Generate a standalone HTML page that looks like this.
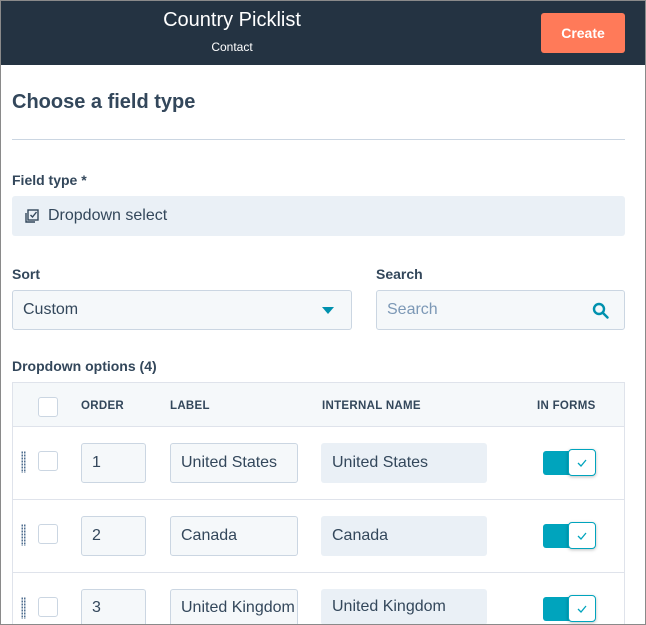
<!DOCTYPE html>
<html style="width:646px;height:625px;overflow:hidden"><head><style>
*{box-sizing:border-box;margin:0;padding:0}
body{width:646px;height:625px;overflow:hidden;background:#fff;font-family:"Liberation Sans",sans-serif;color:#33475b;position:relative}
.frame{position:absolute;left:0;top:0;width:646px;height:625px;border:1px solid #8a8a8a;pointer-events:none;z-index:10}
.a{position:absolute}
.hdr{left:0;top:0;width:646px;height:65px;background:#243342}
.inp{position:absolute;background:#f5f8fa;border:1px solid #cbd6e2;border-radius:3px;font-size:16px;padding-left:10px;display:flex;align-items:center}
.ro{position:absolute;background:#eaf0f6;border-radius:3px;font-size:16px;padding-left:11px;display:flex;align-items:center}
.lbl{font-size:14px;font-weight:bold}
.cb{position:absolute;width:20px;height:20px;border:1.5px solid #cbd6e2;border-radius:3px;background:#fff}
.th{font-size:11.5px;font-weight:bold;letter-spacing:.3px;top:400px}
.tog{position:absolute;width:54px;height:27px}
.tog .t{position:absolute;left:0;top:2px;width:50px;height:24px;background:#00a4bd;border-radius:3px}
.tog .k{position:absolute;left:25px;top:0;width:28px;height:27px;background:#fff;border:1px solid #00a4bd;border-radius:4px;box-shadow:0 1px 3px rgba(0,0,0,.25);display:flex;align-items:center;justify-content:center}
.dots{position:absolute;width:5px;height:22px;background-image:radial-gradient(circle,#516f90 0.9px,transparent 1px);background-size:2.5px 3px}
.line{position:absolute;left:13px;width:611px;height:1px;background:#dfe3eb}
</style></head><body>
<div class="a hdr"></div>
<div class="a" style="left:0;width:464px;top:9px;text-align:center;color:#fff;font-size:20px">Country Picklist</div>
<div class="a" style="left:0;width:464px;top:40px;text-align:center;color:#fff;font-size:12px">Contact</div>
<div class="a" style="left:541px;top:13px;width:84px;height:40px;background:#ff7a59;border-radius:3px;color:#fff;font-weight:bold;font-size:14px;display:flex;align-items:center;justify-content:center">Create</div>

<div class="a" style="left:12px;top:91px;font-size:20px;font-weight:bold">Choose a field type</div>
<div class="a" style="left:12px;top:139px;width:613px;height:1px;background:#cbd6e2"></div>
<div class="a lbl" style="left:12px;top:172px">Field type *</div>
<div class="ro" style="left:12px;top:196px;width:613px;height:40px;padding-left:12px">
<svg width="16" height="16" viewBox="0 0 16 16" fill="none" stroke="#33475b" stroke-width="1.4"><rect x="4" y="2" width="10" height="10"/><path d="M2 5v9h9"/><path d="M6.5 7l2 2 4-5"/></svg><span style="margin-left:8px">Dropdown select</span></div>

<div class="a lbl" style="left:12px;top:266px">Sort</div>
<div class="inp" style="left:12px;top:290px;width:340px;height:40px">Custom</div>
<div class="a" style="left:322px;top:307px;width:0;height:0;border-left:6px solid transparent;border-right:6px solid transparent;border-top:7px solid #0091ae"></div>
<div class="a lbl" style="left:376px;top:266px">Search</div>
<div class="inp" style="left:376px;top:290px;width:249px;height:40px;color:#7c98b6">Search</div>
<svg class="a" style="left:592px;top:302px" width="17" height="17" viewBox="0 0 17 17" fill="none" stroke="#0091ae" stroke-width="2.4"><circle cx="7" cy="7" r="5"/><path d="M11 11l4.5 4.5" stroke-linecap="round"/></svg>

<div class="a lbl" style="left:12px;top:358px">Dropdown options (4)</div>
<div class="a" style="left:12px;top:382px;width:1px;height:243px;background:#dfe3eb"></div>
<div class="a" style="left:624px;top:382px;width:1px;height:243px;background:#dfe3eb"></div>
<div class="a" style="left:13px;top:382px;width:611px;height:44px;background:#f5f8fa;border-top:1px solid #dfe3eb"></div>
<div class="line" style="top:426px"></div>
<div class="line" style="top:499px"></div>
<div class="line" style="top:572px"></div>
<div class="cb" style="left:38px;top:397px"></div>
<div class="a th" style="left:81px">ORDER</div>
<div class="a th" style="left:170px">LABEL</div>
<div class="a th" style="left:322px">INTERNAL NAME</div>
<div class="a th" style="left:537px">IN FORMS</div>

<div class="dots" style="left:21px;top:451px"></div>
<div class="cb" style="left:38px;top:451px"></div>
<div class="inp" style="left:81px;top:443px;width:65px;height:40px">1</div>
<div class="inp" style="left:170px;top:443px;width:128px;height:40px;overflow:hidden;white-space:nowrap">United States</div>
<div class="ro" style="left:321px;top:443px;width:166px;height:40px">United States</div>
<div class="tog" style="left:543px;top:449px"><div class="t"></div><div class="k"><svg width="12" height="10" viewBox="0 0 12 10" fill="none" stroke="#00a4bd" stroke-width="1.3"><path d="M2 5l3 3 5-6"/></svg></div></div>

<div class="dots" style="left:21px;top:524px"></div>
<div class="cb" style="left:38px;top:524px"></div>
<div class="inp" style="left:81px;top:516px;width:65px;height:40px">2</div>
<div class="inp" style="left:170px;top:516px;width:128px;height:40px">Canada</div>
<div class="ro" style="left:321px;top:516px;width:166px;height:40px">Canada</div>
<div class="tog" style="left:543px;top:522px"><div class="t"></div><div class="k"><svg width="12" height="10" viewBox="0 0 12 10" fill="none" stroke="#00a4bd" stroke-width="1.3"><path d="M2 5l3 3 5-6"/></svg></div></div>

<div class="dots" style="left:21px;top:597px"></div>
<div class="cb" style="left:38px;top:597px"></div>
<div class="inp" style="left:81px;top:589px;width:65px;height:36px;border-bottom:none;border-radius:3px 3px 0 0">3</div>
<div class="inp" style="left:170px;top:589px;width:128px;height:36px;border-bottom:none;border-radius:3px 3px 0 0;white-space:nowrap"><span style="overflow:hidden;display:block;width:114px">United Kingdom</span></div>
<div class="ro" style="left:321px;top:589px;width:166px;height:36px">United Kingdom</div>
<div class="tog" style="left:543px;top:595px"><div class="t"></div><div class="k"><svg width="12" height="10" viewBox="0 0 12 10" fill="none" stroke="#00a4bd" stroke-width="1.3"><path d="M2 5l3 3 5-6"/></svg></div></div>

<div class="frame"></div>
</body></html>
